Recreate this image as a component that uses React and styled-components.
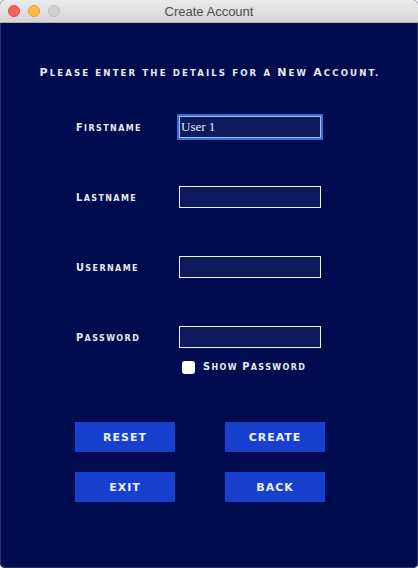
import React, { useState } from 'react';
import styled, { createGlobalStyle } from 'styled-components';

const Global = createGlobalStyle`
  html, body {
    margin: 0;
    padding: 0;
    background: #ffffff;
  }
`;

const Window = styled.div`
  width: 418px;
  height: 568px;
  display: flex;
  flex-direction: column;
  background: #000c4f;
  border-radius: 5px;
  overflow: hidden;
  box-shadow: inset 1px 0 0 #2a3463, inset -1px 0 0 #2a3463, inset 0 -1px 0 #2a3463;
`;

const TitleBar = styled.div`
  position: relative;
  height: 22px;
  flex: none;
  display: flex;
  align-items: center;
  justify-content: center;
  background: linear-gradient(#ebebeb, #d5d5d5);
  border-bottom: 1px solid #b1b1b1;
  font-family: 'Liberation Sans', Arial, sans-serif;
  font-size: 13px;
  color: #4d4d4d;
`;

const Lights = styled.div`
  position: absolute;
  left: 8px;
  top: 5px;
  display: flex;
  gap: 8px;
`;

const Light = styled.span`
  width: 12px;
  height: 12px;
  border-radius: 50%;
  box-sizing: border-box;
  background: ${p => p.color};
  border: 1px solid ${p => p.edge};
`;

const Body = styled.div`
  flex: 1;
  display: flex;
  flex-direction: column;
  padding-top: 41px;
  font-family: 'DejaVu Sans', Verdana, sans-serif;
  font-weight: bold;
  color: #e6e8f2;
`;

// Copperplate-like small caps: capitals at full size, lower case as smaller capitals
const Caps = styled.span`
  font-size: ${p => p.$size}px;
  letter-spacing: ${p => p.$spacing}px;
  white-space: nowrap;
`;

const Small = styled.span`
  font-size: ${p => p.$size}px;
  text-transform: uppercase;
`;

const SmallCaps = ({ text, size, small, spacing }) => {
  const runs = text.match(/[A-Z]+|[^A-Z]+/g) || [];
  return (
    <Caps $size={size} $spacing={spacing}>
      {runs.map((r, i) =>
        /[A-Z]/.test(r[0]) ? r : <Small key={i} $size={small}>{r}</Small>
      )}
    </Caps>
  );
};

const Heading = styled.div`
  text-align: center;
  line-height: 14px;
  padding-left: 2px;
`;

const Form = styled.div`
  margin: 36px 0 0 76px;
  display: grid;
  grid-template-columns: 103px 142px;
  row-gap: 48px;
  align-items: center;
`;

const Label = styled.label`
  line-height: 14px;
`;

const Field = styled.input`
  width: 142px;
  height: 22px;
  box-sizing: border-box;
  margin: 0;
  padding: 0 1px;
  background: #0d1a5e;
  border: 1px solid ${p => (p.$focused ? '#9cc0f2' : '#f4f4f8')};
  box-shadow: ${p => (p.$focused ? '0 0 0 2px #3a6fd2' : 'none')};
  outline: none;
  color: #e8eaf4;
  font-family: 'Liberation Serif', 'Times New Roman', serif;
  font-size: 13px;
`;

const CheckRow = styled.label`
  margin: 12px 0 0 182px;
  display: flex;
  align-items: center;
  gap: 8px;
  line-height: 14px;
`;

const Box = styled.span`
  width: 13px;
  height: 13px;
  border-radius: 3px;
  background: #ffffff;
  flex: none;
`;

const Buttons = styled.div`
  margin: 47px 0 0 75px;
  display: grid;
  grid-template-columns: 100px 100px;
  column-gap: 50px;
  row-gap: 20px;
`;

const Button = styled.button`
  height: 30px;
  margin: 0;
  padding: 0;
  border: none;
  background: #1740cf;
  color: #eef0fa;
  font-family: 'DejaVu Sans', Verdana, sans-serif;
  font-weight: bold;
  font-size: 11px;
  letter-spacing: 1px;
  cursor: pointer;
`;

const fields = [
  { label: 'Firstname', value: 'User 1', focused: true },
  { label: 'Lastname', value: '' },
  { label: 'Username', value: '' },
  { label: 'Password', value: '', type: 'password' }
];

const App = () => {
  const [values, setValues] = useState(fields.map(f => f.value));
  return (
    <Window>
      <Global />
      <TitleBar>
        <Lights>
          <Light color="#fc605c" edge="#de4a44" />
          <Light color="#fdbc40" edge="#dea236" />
          <Light color="#d0d0d0" edge="#bcbcbc" />
        </Lights>
        Create Account
      </TitleBar>
      <Body>
        <Heading>
          <SmallCaps
            text="Please enter the details for a New Account."
            size={11}
            small={8.6}
            spacing={2.1}
          />
        </Heading>
        <Form>
          {fields.map((f, i) => (
            <React.Fragment key={f.label}>
              <Label>
                <SmallCaps text={f.label} size={9.8} small={8} spacing={1.4} />
              </Label>
              <Field
                type={f.type || 'text'}
                $focused={f.focused}
                value={values[i]}
                onChange={e => {
                  const next = [...values];
                  next[i] = e.target.value;
                  setValues(next);
                }}
              />
            </React.Fragment>
          ))}
        </Form>
        <CheckRow>
          <Box />
          <SmallCaps text="Show Password" size={9.8} small={8} spacing={1.4} />
        </CheckRow>
        <Buttons>
          <Button>RESET</Button>
          <Button>CREATE</Button>
          <Button>EXIT</Button>
          <Button>BACK</Button>
        </Buttons>
      </Body>
    </Window>
  );
};

export default App;
